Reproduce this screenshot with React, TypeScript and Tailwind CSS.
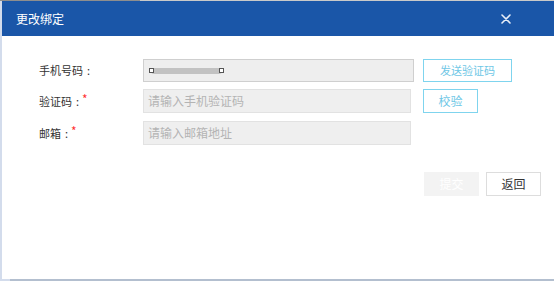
import React from "react";

const font = { fontFamily: '"Noto Sans CJK SC", "Microsoft YaHei", sans-serif' };

function Label({ text, required }: { text: string; required?: boolean }) {
  return (
    <div className="w-[141px] shrink-0 pl-[37px] flex items-center text-[11px] text-[#333] whitespace-nowrap">
      <span>{text}</span>
      <span className="ml-[4px]">:</span>
      {required && <span className="ml-[3px] text-[#ff3333] text-[12px] -mt-[4px]">*</span>}
    </div>
  );
}

export default function App() {
  return (
    <div className="w-[554px] h-[281px] flex flex-col bg-white overflow-hidden" style={font}>
      <div className="h-[1px] flex">
        <div className="w-[140px] bg-[#8e8e8e]" />
        <div className="flex-1 bg-[#c9c9c9]" />
      </div>
      <div className="flex-1 flex">
        <div className="w-[2px] bg-[#d3dcec]" />
        <div className="flex-1 flex flex-col">
          <div className="h-[35px] bg-[#1a56a8] flex items-center justify-between pl-[14px]">
            <span className="text-white text-[12px]">更改绑定</span>
            <svg width="10" height="10" viewBox="0 0 10 10" className="mr-[43px]">
              <path d="M1 1 L9 9 M9 1 L1 9" stroke="#e8eef8" strokeWidth="1.6" strokeLinecap="round" />
            </svg>
          </div>
          <div className="flex-1 flex flex-col pt-[23px]">
            <div className="flex flex-col gap-[7px]">
              <div className="flex items-center h-[23px]">
                <Label text="手机号码" />
                <div className="w-[271px] h-[23px] bg-[#eeeeee] border border-[#cfcfcf] flex items-center pl-[5px]">
                  <div className="relative w-[75px] h-[7px] flex items-center">
                    <div className="absolute left-[2px] right-[2px] h-[6px] rounded-full bg-[#c2c2c2]" />
                    <div className="absolute left-0 w-[5px] h-[5px] border border-[#555] bg-white" />
                    <div className="absolute right-0 w-[5px] h-[5px] border border-[#555] bg-white" />
                  </div>
                </div>
                <div className="ml-[9px] w-[89px] h-[23px] border border-[#7fd4ee] flex items-center justify-center text-[11px] text-[#6ec7e6]">
                  发送验证码
                </div>
              </div>
              <div className="flex items-center h-[24px]">
                <Label text="验证码" required />
                <div className="w-[268px] h-[24px] bg-[#efefef] border border-[#e2e2e2] flex items-center pl-[4px] text-[12px] text-[#b4b4b4]">
                  请输入手机验证码
                </div>
                <div className="ml-[12px] w-[55px] h-[24px] border border-[#7fd4ee] flex items-center justify-center text-[12px] text-[#6ec7e6]">
                  校验
                </div>
              </div>
              <div className="flex items-center h-[24px] mt-[1px]">
                <Label text="邮箱" required />
                <div className="w-[268px] h-[24px] bg-[#efefef] border border-[#e2e2e2] flex items-center pl-[4px] text-[12px] text-[#b4b4b4]">
                  请输入邮箱地址
                </div>
              </div>
            </div>
            <div className="flex justify-end mt-[27px] pr-[13px] gap-[7px]">
              <div className="w-[55px] h-[24px] bg-[#f3f3f3] flex items-center justify-center text-[12px] text-white">
                提交
              </div>
              <div className="w-[55px] h-[24px] bg-white border border-[#dddddd] flex items-center justify-center text-[12px] text-[#333]">
                返回
              </div>
            </div>
          </div>
        </div>
      </div>
      <div className="h-[2px] flex">
        <div className="w-[10px] bg-[#d3dcec]" />
        <div className="flex-1 bg-[#b3bfcf]" />
      </div>
    </div>
  );
}
